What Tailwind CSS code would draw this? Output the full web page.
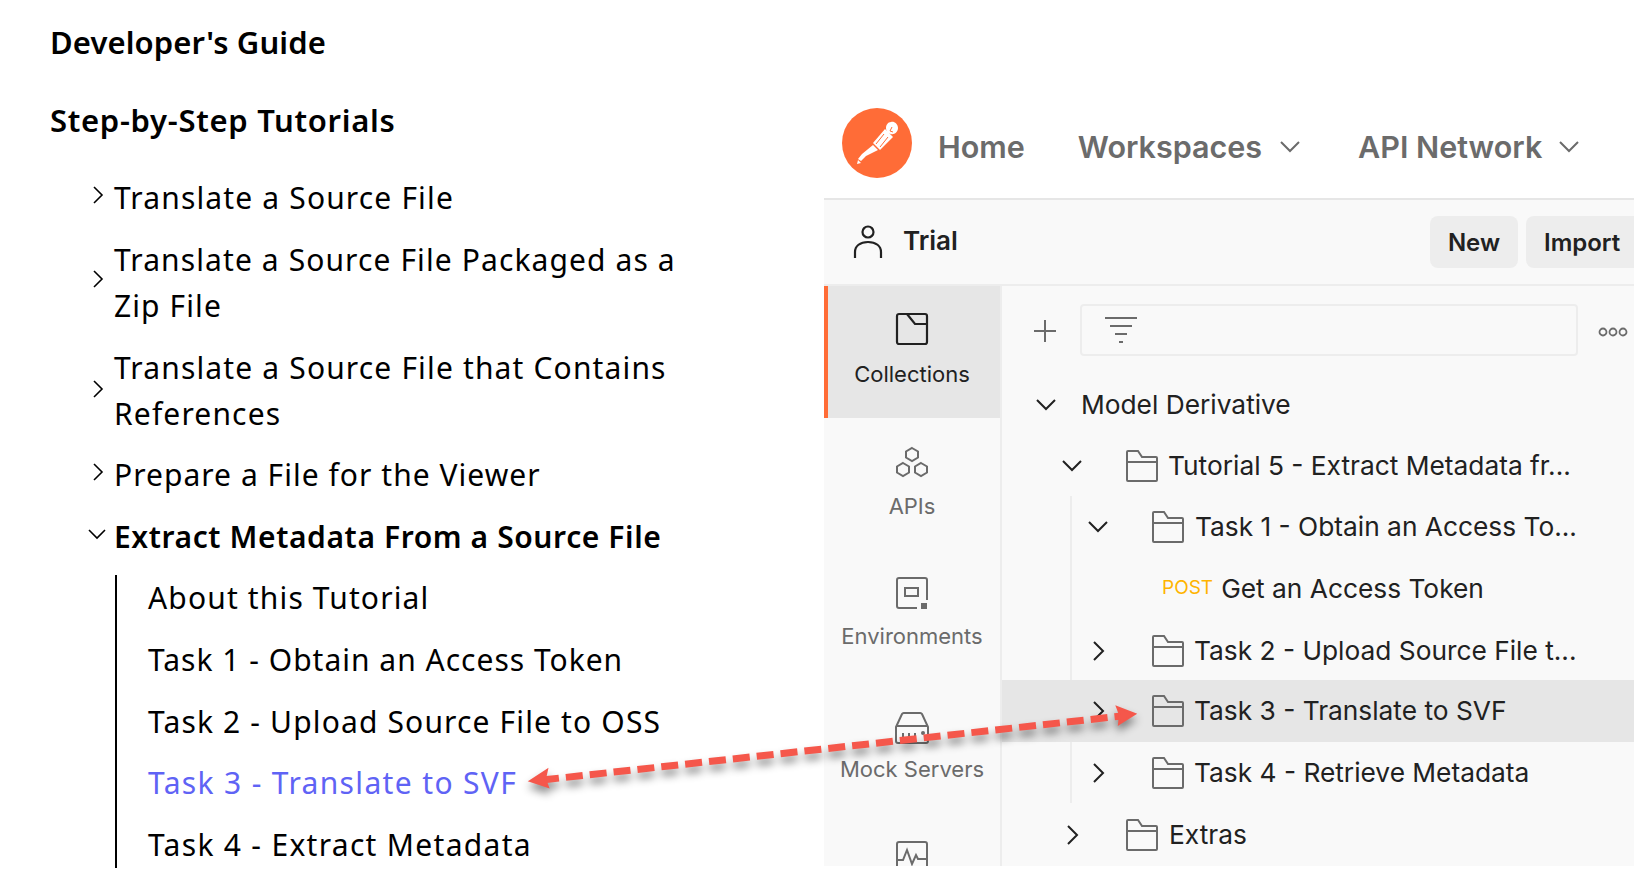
<!DOCTYPE html>
<html>
  <head>
    <title>Developer's Guide</title>
    <script src="https://cdn.jsdelivr.net/npm/@tailwindcss/browser@4"></script>
  </head>
  <body class="bg-white">
    <div class="relative flex w-[1634px] h-[894px] overflow-hidden">

      <!-- docs nav -->
      <div class="w-[824px] shrink-0 pl-[50px] pt-[21px] text-black font-['Noto_Sans',sans-serif] text-[30px] leading-[46px] tracking-[1.15px]">
        <h2 class="font-semibold text-[31px] leading-[42px] tracking-[0.1px]">Developer's Guide</h2>
        <h2 class="mt-[36px] font-semibold text-[31px] leading-[42px] tracking-[0.7px]">Step-by-Step Tutorials</h2>

        <ul class="mt-[34px] ml-[41px] w-[610px] flex flex-col gap-[16px]">
          <li class="flex items-center gap-[10px]">
            <svg class="w-[13px] h-[20px] shrink-0 mb-[6px]" viewBox="0 0 13 20" fill="none" stroke="#000" stroke-width="1.6"><path d="M3 2l8 8-8 8"/></svg>
            <span>Translate a Source File</span>
          </li>
          <li class="flex items-center gap-[10px]">
            <svg class="w-[13px] h-[20px] shrink-0 mb-[8px]" viewBox="0 0 13 20" fill="none" stroke="#000" stroke-width="1.6"><path d="M3 2l8 8-8 8"/></svg>
            <span class="tracking-[1.1px]">Translate a Source File Packaged as a Zip File</span>
          </li>
          <li class="flex items-center gap-[10px]">
            <svg class="w-[13px] h-[20px] shrink-0 mb-[4px]" viewBox="0 0 13 20" fill="none" stroke="#000" stroke-width="1.6"><path d="M3 2l8 8-8 8"/></svg>
            <span>Translate a Source File that Contains References</span>
          </li>
          <li class="flex items-center gap-[10px] -mt-[1px]">
            <svg class="w-[13px] h-[20px] shrink-0 mb-[6px]" viewBox="0 0 13 20" fill="none" stroke="#000" stroke-width="1.6"><path d="M3 2l8 8-8 8"/></svg>
            <span class="tracking-[1.03px]">Prepare a File for the Viewer</span>
          </li>
          <li class="flex items-center gap-[8px]">
            <svg class="w-[18px] h-[13px] shrink-0 -ml-[3px] mb-[6px]" viewBox="0 0 18 13" fill="none" stroke="#000" stroke-width="1.6"><path d="M1 2l8 8 8-8"/></svg>
            <span class="font-semibold tracking-[0.6px]">Extract Metadata From a Source File</span>
          </li>
        </ul>

        <ul class="mt-[15px] ml-[65px] h-[293px] border-l-2 border-black pl-[31px] flex flex-col gap-[16px]">
          <li>About this Tutorial</li>
          <li class="tracking-[1px]">Task 1 - Obtain an Access Token</li>
          <li>Task 2 - Upload Source File to OSS</li>
          <li class="text-[#5f63f5] tracking-[1.35px] -mt-[1px]">Task 3 - Translate to SVF</li>
          <li class="tracking-[1.3px]">Task 4 - Extract Metadata</li>
        </ul>
      </div>

      <!-- postman window -->
      <div class="mt-[100px] h-[766px] flex-1 min-w-0 flex flex-col overflow-hidden font-['Inter',sans-serif]">
        <div class="h-[98px] shrink-0 flex items-center pl-[18px] pb-[4px] text-[#6b6b6b] font-semibold text-[30.5px]">
          <svg class="w-[70px] h-[70px] shrink-0 -mt-[8px]" viewBox="0 0 70 70">
            <circle cx="35" cy="35" r="35" fill="#ff6c37"/>
            <path d="M49 14c3-1 7 2 7 6s-4 7-7 6c-3 0-5-3-5-6s2-6 5-6z" fill="#fff"/>
            <path d="M43 21l8 8-13 13-7-7z" fill="#fff"/>
            <path d="M31 37l5 5-12 6-5 5-3-2 4-5z" fill="#fff"/>
            <path d="M16 52l3 3-4 1z" fill="#fff"/>
            <path d="M50 19l-2 4 3 1" fill="none" stroke="#ff6c37" stroke-width="1"/>
            <path d="M42 26l-8 10M46 29l-8 10" stroke="#ff6c37" stroke-width="1"/>
          </svg>
          <span class="ml-[26px]">Home</span>
          <span class="ml-[53px]">Workspaces</span>
          <svg class="ml-[18px] w-[20px] h-[12px]" viewBox="0 0 20 12" fill="none" stroke="#6b6b6b" stroke-width="2"><path d="M1 1l9 9 9-9"/></svg>
          <span class="ml-[58px]">API Network</span>
          <svg class="ml-[17px] w-[20px] h-[12px]" viewBox="0 0 20 12" fill="none" stroke="#6b6b6b" stroke-width="2"><path d="M1 1l9 9 9-9"/></svg>
        </div>

        <div class="flex-1 min-h-0 flex flex-col bg-[#f9f9f9] border-t-2 border-[#e6e6e6]">
          <!-- workspace bar -->
          <div class="h-[86px] shrink-0 flex items-center pl-[29px] border-b-2 border-[#ededed]">
            <svg class="w-[30px] h-[34px]" viewBox="0 0 30 34" fill="none" stroke="#212121" stroke-width="2.2"><circle cx="15" cy="7" r="5.5"/><path d="M2 33v-6c0-6 5-10 13-10s13 4 13 10v6"/></svg>
            <span class="ml-[20px] mb-[4px] text-[26px] font-semibold text-[#212121]">Trial</span>
            <div class="ml-auto flex gap-[8px] -mr-[20px] text-[24px] font-semibold text-[#212121]">
              <div class="w-[88px] h-[52px] pt-[1px] rounded-[8px] bg-[#ededed] flex items-center justify-center">New</div>
              <div class="w-[128px] h-[52px] pt-[1px] pl-[18px] rounded-[8px] bg-[#ededed] flex items-center">Import</div>
            </div>
          </div>

          <div class="flex-1 min-h-0 flex">
            <!-- sidebar -->
            <div class="w-[178px] shrink-0 border-r-2 border-[#ededed] text-[22px] leading-[28px] text-[#6b6b6b] text-center">
              <div class="h-[132px] pt-[26px] pr-[4px] bg-[#e6e6e6] border-l-4 border-[#ff6c37] text-[#212121] flex flex-col items-center">
                <svg class="w-[34px] h-[34px]" viewBox="0 0 34 34" fill="none" stroke="#212121" stroke-width="2.2"><rect x="2" y="2" width="30" height="30" rx="2"/><path d="M12 2l8 10h12"/></svg>
                <span class="mt-[14px]">Collections</span>
              </div>
              <div class="h-[130px] pt-[28px] flex flex-col items-center">
                <svg class="w-[34px] h-[34px]" viewBox="0 0 34 34" fill="none" stroke="#6b6b6b" stroke-width="2"><path d="M17 2l6 3.5v6L17 15l-6-3.5v-6z"/><path d="M8 17l6 3.5v6L8 30l-6-3.5v-6z"/><path d="M26 17l6 3.5v6L26 30l-6-3.5v-6z"/></svg>
                <span class="mt-[12px]">APIs</span>
              </div>
              <div class="h-[132px] pt-[28px] flex flex-col items-center">
                <svg class="w-[34px] h-[34px]" viewBox="0 0 34 34" fill="none" stroke="#6b6b6b" stroke-width="2"><path d="M22 32H4a2 2 0 0 1-2-2V4a2 2 0 0 1 2-2h26a2 2 0 0 1 2 2v20"/><rect x="10" y="12" width="13" height="8"/><rect x="26" y="27" width="6" height="6" fill="#6b6b6b" stroke="none"/></svg>
                <span class="mt-[12px]">Environments</span>
              </div>
              <div class="h-[130px] pt-[31px] flex flex-col items-center">
                <svg class="w-[36px] h-[34px]" viewBox="0 0 36 34" fill="none" stroke="#6b6b6b" stroke-width="2"><path d="M2 16L8 3a2 2 0 0 1 2-1h16a2 2 0 0 1 2 1l6 13v14a2 2 0 0 1-2 2H4a2 2 0 0 1-2-2z"/><path d="M2 15h32M9 22v10M15 22v10M21 22v10"/><circle cx="29" cy="22" r="2" fill="#6b6b6b" stroke="none"/></svg>
                <span class="mt-[10px]">Mock Servers</span>
              </div>
              <div class="h-[60px] pt-[30px] flex flex-col items-center">
                <svg class="w-[34px] h-[34px] shrink-0" viewBox="0 0 34 34" fill="none" stroke="#6b6b6b" stroke-width="2"><rect x="2" y="2" width="30" height="30" rx="2"/><path d="M2 20h6l4-10 5 14 4-9 2 4h9"/></svg>
              </div>
            </div>

            <!-- tree -->
            <div class="flex-1 min-w-0 text-[26.3px] text-[#212121]">
              <div class="h-[88px] flex items-center">
                <svg class="ml-[30px] mt-[2px] w-[26px] h-[26px]" viewBox="0 0 26 26" fill="none" stroke="#6b6b6b" stroke-width="2"><path d="M13 2v22M2 13h22"/></svg>
                <div class="ml-[22px] w-[498px] h-[52px] border-2 border-[#ededed] rounded-[4px] flex items-center pl-[23px]">
                  <svg class="w-[32px] h-[26px]" viewBox="0 0 32 26" fill="none" stroke="#6b6b6b" stroke-width="2"><path d="M0 1h32M5 9h22M10 17h12M14 25h4"/></svg>
                </div>
                <svg class="ml-[20px] mt-[3px] w-[30px] h-[10px] shrink-0" viewBox="0 0 30 10" fill="none" stroke="#6b6b6b" stroke-width="1.8"><circle cx="5" cy="5" r="3.5"/><circle cx="15" cy="5" r="3.5"/><circle cx="25" cy="5" r="3.5"/></svg>
              </div>

              <div class="h-[62px] flex items-center pl-[34px]">
                <svg class="w-[20px] h-[12px] shrink-0" viewBox="0 0 20 12" fill="none" stroke="#212121" stroke-width="2"><path d="M1 1l9 9 9-9"/></svg>
                <span class="ml-[25px]">Model Derivative</span>
              </div>

              <div class="h-[60px] flex items-center pl-[60px]">
                <svg class="w-[20px] h-[12px] shrink-0" viewBox="0 0 20 12" fill="none" stroke="#212121" stroke-width="2"><path d="M1 1l9 9 9-9"/></svg>
                <svg class="ml-[44px] w-[32px] h-[32px] shrink-0" viewBox="0 0 32 32" fill="none" stroke="#6b6b6b" stroke-width="2"><path d="M1 30V2a1 1 0 0 1 1-1h10l4 6h14a1 1 0 0 1 1 1v22a1 1 0 0 1-1 1H2a1 1 0 0 1-1-1zM1 12h30"/></svg>
                <span class="ml-[10px] whitespace-nowrap">Tutorial 5 - Extract Metadata fr...</span>
              </div>

              <div class="h-[62px] pl-[68px] flex">
                <div class="flex-1 flex items-center border-l-2 border-[#ededed] pl-[16px]">
                  <svg class="w-[20px] h-[12px] shrink-0" viewBox="0 0 20 12" fill="none" stroke="#212121" stroke-width="2"><path d="M1 1l9 9 9-9"/></svg>
                  <svg class="ml-[44px] w-[32px] h-[32px] shrink-0" viewBox="0 0 32 32" fill="none" stroke="#6b6b6b" stroke-width="2"><path d="M1 30V2a1 1 0 0 1 1-1h10l4 6h14a1 1 0 0 1 1 1v22a1 1 0 0 1-1 1H2a1 1 0 0 1-1-1zM1 12h30"/></svg>
                  <span class="ml-[11px] whitespace-nowrap">Task 1 - Obtain an Access To...</span>
                </div>
              </div>

              <div class="h-[61px] pl-[68px] flex">
                <div class="flex-1 flex items-center border-l-2 border-[#ededed] pl-[90px]">
                  <span class="text-[19px] text-[#ffb400]">POST</span>
                  <span class="ml-[8px] whitespace-nowrap">Get an Access Token</span>
                </div>
              </div>

              <div class="h-[61px] pl-[68px] flex">
                <div class="flex-1 flex items-center border-l-2 border-[#ededed] pl-[21px] pt-[3px]">
                  <svg class="w-[12px] h-[20px] shrink-0" viewBox="0 0 12 20" fill="none" stroke="#212121" stroke-width="2"><path d="M1 1l9 9-9 9"/></svg>
                  <svg class="ml-[47px] w-[32px] h-[32px] shrink-0" viewBox="0 0 32 32" fill="none" stroke="#6b6b6b" stroke-width="2"><path d="M1 30V2a1 1 0 0 1 1-1h10l4 6h14a1 1 0 0 1 1 1v22a1 1 0 0 1-1 1H2a1 1 0 0 1-1-1zM1 12h30"/></svg>
                  <span class="ml-[10px] whitespace-nowrap">Task 2 - Upload Source File t...</span>
                </div>
              </div>

              <div class="h-[62px] pl-[68px] flex bg-[#e6e6e6]">
                <div class="flex-1 flex items-center border-l-2 border-transparent pl-[21px]">
                  <svg class="w-[12px] h-[20px] shrink-0" viewBox="0 0 12 20" fill="none" stroke="#212121" stroke-width="2"><path d="M1 1l9 9-9 9"/></svg>
                  <svg class="ml-[47px] w-[32px] h-[32px] shrink-0" viewBox="0 0 32 32" fill="none" stroke="#6b6b6b" stroke-width="2"><path d="M1 30V2a1 1 0 0 1 1-1h10l4 6h14a1 1 0 0 1 1 1v22a1 1 0 0 1-1 1H2a1 1 0 0 1-1-1zM1 12h30"/></svg>
                  <span class="ml-[10px] whitespace-nowrap">Task 3 - Translate to SVF</span>
                </div>
              </div>

              <div class="h-[61px] pl-[68px] flex">
                <div class="flex-1 flex items-center border-l-2 border-[#ededed] pl-[21px]">
                  <svg class="w-[12px] h-[20px] shrink-0" viewBox="0 0 12 20" fill="none" stroke="#212121" stroke-width="2"><path d="M1 1l9 9-9 9"/></svg>
                  <svg class="ml-[47px] w-[32px] h-[32px] shrink-0" viewBox="0 0 32 32" fill="none" stroke="#6b6b6b" stroke-width="2"><path d="M1 30V2a1 1 0 0 1 1-1h10l4 6h14a1 1 0 0 1 1 1v22a1 1 0 0 1-1 1H2a1 1 0 0 1-1-1zM1 12h30"/></svg>
                  <span class="ml-[10px] whitespace-nowrap">Task 4 - Retrieve Metadata</span>
                </div>
              </div>

              <div class="h-[61px] flex items-center pl-[65px] pt-[2px]">
                <svg class="w-[12px] h-[20px] shrink-0" viewBox="0 0 12 20" fill="none" stroke="#212121" stroke-width="2"><path d="M1 1l9 9-9 9"/></svg>
                <svg class="ml-[47px] w-[32px] h-[32px] shrink-0" viewBox="0 0 32 32" fill="none" stroke="#6b6b6b" stroke-width="2"><path d="M1 30V2a1 1 0 0 1 1-1h10l4 6h14a1 1 0 0 1 1 1v22a1 1 0 0 1-1 1H2a1 1 0 0 1-1-1zM1 12h30"/></svg>
                <span class="ml-[11px]">Extras</span>
              </div>
            </div>
          </div>
        </div>
      </div>

      <!-- callout arrow over both panes -->
      <svg class="absolute left-0 top-0 w-[1634px] h-[894px] pointer-events-none drop-shadow-[0_6px_4px_rgba(0,0,0,0.45)]" viewBox="0 0 1634 894" fill="none">
        <path d="M542 780L1122 716" stroke="#f5574b" stroke-width="7" stroke-dasharray="17 7"/>
        <path d="M530 781l17-11-2 9 3 8z" fill="#f5574b" stroke="#f5574b" stroke-width="2"/>
        <path d="M1135 714l-18-7 3 8-1 9z" fill="#f5574b" stroke="#f5574b" stroke-width="2"/>
      </svg>
    </div>
  </body>
</html>
